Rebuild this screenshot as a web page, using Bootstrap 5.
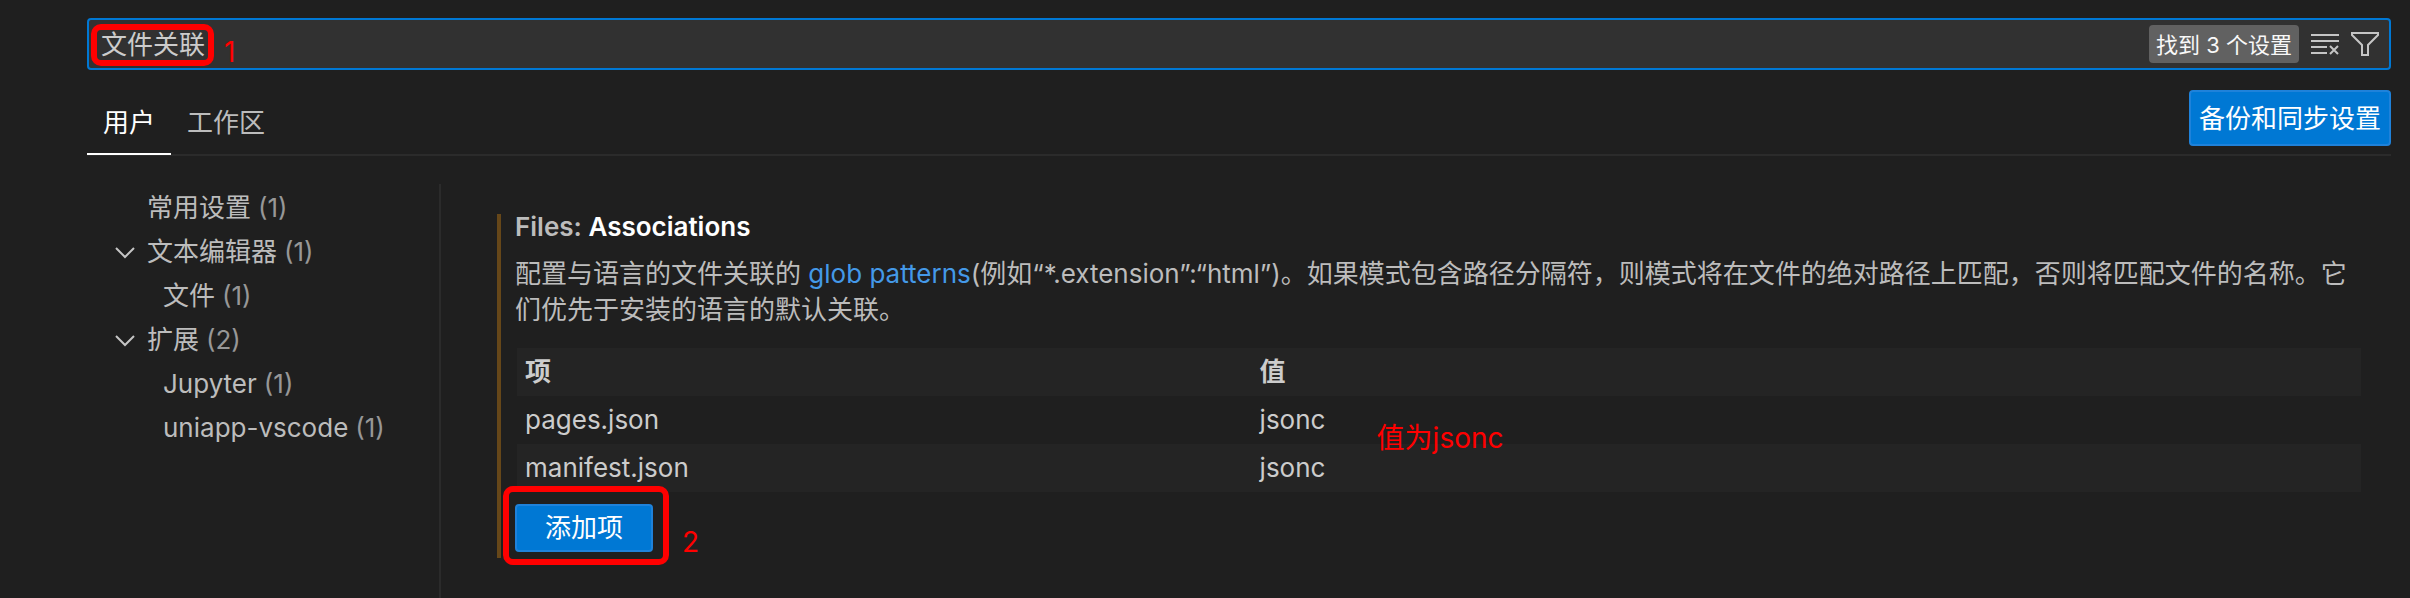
<!DOCTYPE html>
<html lang="zh-CN" data-bs-theme="dark">
<head>
<meta charset="utf-8">
<meta name="viewport" content="width=device-width, initial-scale=1">
<title>设置</title>
<link href="https://cdn.jsdelivr.net/npm/bootstrap@5.3.0/dist/css/bootstrap.min.css" rel="stylesheet">
<style>
body { background: #1f1f1f; color: #bcbcbc; font: 26px/36px Inter, "Noto Sans CJK SC", sans-serif; }
.settings-page { padding: 18px 19px 0 87px; }
.search-bar { height: 52px; background: #313131; border: 2px solid #0078d4; border-radius: 4px; padding-right: 8px; }
.search-bar input { background: none; border: 0; outline: 0; color: #ccc; padding: 2px 0 0 12px; }
.found-count { background: #616161; color: #f8f8f8; border-radius: 4px; font-size: 22px; line-height: 36px; padding: 2px 7px 0; margin-right: 10px; }
.tool-btn { width: 32px; height: 32px; }
.scope-row { height: 86px; border-bottom: 2px solid #2b2b2b; }
.scope-row .nav { margin-bottom: -1px; }
.scope-row .nav-link { color: #bcbcbc; padding: 2px 16px 0; height: 66px; line-height: 64px; border-bottom: 2px solid transparent; border-radius: 0; }
.scope-row .nav-link.active { color: #fff; border-color: #fff; }
.blue-btn { background: #0078d4; border: 2px solid #1f82da; border-radius: 4px; color: #fff; font-size: 26px; line-height: 36px; }
.blue-btn:hover { background: #026ec1; color: #fff; }
.sync-btn { padding: 9px 8px 7px; margin-top: 20px; }
.add-btn { padding: 4px 28px; }
.toc { width: 354px; margin-top: 28px; padding-top: 2px; border-right: 2px solid #2b2b2b; }
.toc a { height: 44px; color: inherit; padding-left: 25px; }
.toc .twist { width: 35px; }
.toc .child { padding-left: 76px; }
.toc .count { color: #979797; margin-left: 7px; }
.setting { margin: 58px 30px 0 56px; border-left: 4px solid #664719; padding: 0 0 6px 14px; align-self: flex-start; }
.setting h2 { font-size: 26px; line-height: 26px; margin-bottom: 16px; font-weight: 600; color: #bcbcbc; }
.setting h2 span { color: #fff; }
.setting p { margin-bottom: 20px; }
.setting p a { color: #4499e8; }
.pair-table { color: #ccc; margin: 0 0 12px 2px; width: calc(100% - 2px); }
.pair-table tr { height: 48px; }
.pair-table th, .pair-table td { padding: 0 0 0 8px; }
.pair-table th:last-child, .pair-table td:last-child { padding-left: 5px; }
.pair-table tr.shade { background: #242424; }
.key-col { width: 40%; }
.frame { position: absolute; border: 6px solid #f00; border-radius: 10px; pointer-events: none; }
.note { position: absolute; color: #f00; font-size: 28px; white-space: nowrap; }
.frame-search { left: 2px; top: 4px; width: 123px; height: 42px; }
.note-search { left: 135px; top: 14px; }
.frame-add { inset: -18px -16px -13px -12px; }
.note-add { left: 167px; top: 20px; }
.note-value { left: 122px; top: 24px; }
</style>
</head>
<body>
<div class="settings-page min-vh-100 d-flex flex-column">
  <div class="search-bar d-flex align-items-center position-relative">
    <input type="text" class="flex-grow-1" value="文件关联" aria-label="搜索设置">
    <span class="found-count">找到 3 个设置</span>
    <button class="btn p-0 border-0 tool-btn d-flex me-2" aria-label="清除搜索">
      <svg width="32" height="32" fill="none" stroke="#c5c5c5" stroke-width="2"><path d="M2 7h28M2 13h28M2 19h16M2 25h16M21 18l8 8M29 18l-8 8"/></svg>
    </button>
    <button class="btn p-0 border-0 tool-btn d-flex" aria-label="筛选设置">
      <svg width="32" height="32" fill="none" stroke="#c5c5c5" stroke-width="2"><path d="M3 5h26v2L19 17v10h-6V17L3 7z"/></svg>
    </button>
    <div class="frame frame-search"></div>
    <span class="note note-search">1</span>
  </div>

  <div class="scope-row d-flex justify-content-between align-items-end">
    <nav class="nav flex-nowrap">
      <a class="nav-link active" href="#" aria-current="page">用户</a>
      <a class="nav-link" href="#">工作区</a>
    </nav>
    <button class="btn blue-btn sync-btn align-self-start">备份和同步设置</button>
  </div>

  <div class="d-flex flex-grow-1">
    <nav class="toc flex-shrink-0" aria-label="设置目录">
      <a href="#" class="d-flex align-items-center text-decoration-none"><span class="twist"></span>常用设置<span class="count">(1)</span></a>
      <a href="#" class="d-flex align-items-center text-decoration-none"><span class="twist d-flex"><svg width="28" height="16" fill="none" stroke="#c5c5c5" stroke-width="2"><path d="M4 4l9 9 9-9"/></svg></span>文本编辑器<span class="count">(1)</span></a>
      <a href="#" class="child d-flex align-items-center text-decoration-none">文件<span class="count">(1)</span></a>
      <a href="#" class="d-flex align-items-center text-decoration-none"><span class="twist d-flex"><svg width="28" height="16" fill="none" stroke="#c5c5c5" stroke-width="2"><path d="M4 4l9 9 9-9"/></svg></span>扩展<span class="count">(2)</span></a>
      <a href="#" class="child d-flex align-items-center text-decoration-none">Jupyter<span class="count">(1)</span></a>
      <a href="#" class="child d-flex align-items-center text-decoration-none">uniapp-vscode<span class="count">(1)</span></a>
    </nav>

    <main class="setting flex-grow-1">
      <h2>Files: <span>Associations</span></h2>
      <p>配置与语言的文件关联的 <a href="#" class="text-decoration-none">glob patterns</a>(例如“*.extension”:“html”)。如果模式包含路径分隔符，则模式将在文件的绝对路径上匹配，否则将匹配文件的名称。它们优先于安装的语言的默认关联。</p>
      <table class="pair-table">
        <thead>
          <tr class="shade"><th scope="col" class="key-col">项</th><th scope="col">值</th></tr>
        </thead>
        <tbody>
          <tr><td>pages.json</td><td class="position-relative">jsonc<span class="note note-value">值为jsonc</span></td></tr>
          <tr class="shade"><td>manifest.json</td><td>jsonc</td></tr>
        </tbody>
      </table>
      <div class="position-relative d-inline-flex">
        <button class="btn blue-btn add-btn">添加项</button>
        <div class="frame frame-add"></div>
        <span class="note note-add">2</span>
      </div>
    </main>
  </div>
</div>
<script src="https://cdn.jsdelivr.net/npm/bootstrap@5.3.0/dist/js/bootstrap.bundle.min.js"></script>
</body>
</html>
